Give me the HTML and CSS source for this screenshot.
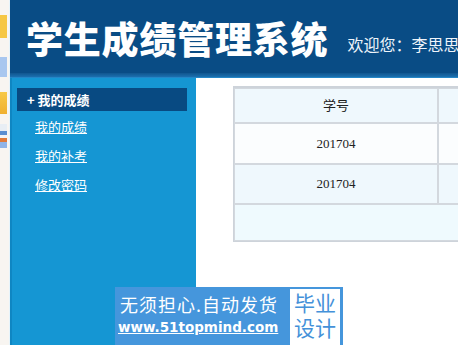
FILE: index.html
```html
<!DOCTYPE html>
<html lang="zh">
<head>
<meta charset="utf-8">
<title>学生成绩管理系统</title>
<link rel="stylesheet" href="styles.css">
</head>
<body>
<div class="page">
  <div class="dock">
    <span class="dock-icon yellow"></span>
    <span class="dock-icon blue"></span>
    <span class="dock-icon orange"></span>
    <span class="dock-icon mixed"></span>
  </div>
  <div class="main">
    <header class="header">
      <h1 class="title">学生成绩管理系统</h1>
      <div class="welcome">欢迎您：李思思</div>
    </header>
    <div class="stripe"></div>
    <div class="body">
      <nav class="sidebar">
        <div class="menu-head">+ 我的成绩</div>
        <a class="menu-link" href="#">我的成绩</a>
        <a class="menu-link" href="#">我的补考</a>
        <a class="menu-link" href="#">修改密码</a>
      </nav>
      <section class="content">
        <table class="grid">
          <tr class="row-head"><td class="c1">学号</td><td class="c2"></td></tr>
          <tr class="row-a"><td class="c1">201704</td><td class="c2"></td></tr>
          <tr class="row-b"><td class="c1">201704</td><td class="c2"></td></tr>
          <tr class="row-foot"><td colspan="2"></td></tr>
        </table>
      </section>
    </div>
  </div>
  <div class="promo">
    <div class="promo-text">
      <div class="promo-line1">无须担心.自动发货</div>
      <a class="promo-url" href="#">www.51topmind.com</a>
    </div>
    <div class="promo-box">
      <span class="promo-word">毕业</span>
      <span class="promo-word">设计</span>
    </div>
  </div>
</div>
</body>
</html>
```

FILE: styles.css
```css
html, body {
  margin: 0;
  padding: 0;
  width: 458px;
  height: 345px;
  overflow: hidden;
  background: #ffffff;
  font-family: "Noto Sans CJK SC", "Noto Sans", sans-serif;
}
.page {
  position: relative;
  display: flex;
  width: 458px;
  height: 345px;
}
.dock {
  flex: 0 0 9px;
  background: #f8f5f1;
  border-right: 1px solid #e6f4fb;
  display: flex;
  flex-direction: column;
  padding-top: 15px;
}
.dock-icon {
  display: block;
  width: 7px;
  margin-bottom: 19px;
}
.dock-icon.yellow { height: 23px; background: #f6c744; }
.dock-icon.blue { height: 20px; background: #a9c7ef; margin-bottom: 15px; }
.dock-icon.orange { height: 22px; background: linear-gradient(#f7c948, #f0b030); margin-bottom: 10px; }
.dock-icon.mixed { height: 24px; background: linear-gradient(#e8eef4 0 30%, #5a8ed0 30% 45%, #f4f4f4 45% 60%, #e07a3a 60% 75%, #8fb4e8 75%); }
.main {
  flex: 1;
  display: flex;
  flex-direction: column;
  min-width: 0;
}
.header {
  height: 73px;
  background: #094c85;
  display: flex;
  align-items: flex-start;
  white-space: nowrap;
  overflow: hidden;
}
.title {
  margin: 19px 0 0 16px;
  font-size: 37px;
  line-height: 38px;
  font-weight: 900;
  color: #ffffff;
  letter-spacing: 0.8px;
}
.welcome {
  margin: 34px 0 0 19px;
  font-size: 16px;
  line-height: 20px;
  color: #eef4fa;
}
.stripe {
  height: 5px;
  background: linear-gradient(#11568f, #1a6cab 70%, #2a93d4);
}
.body {
  flex: 1;
  display: flex;
}
.sidebar {
  flex: 0 0 184px;
  background: #1596d3;
  border-left: 2px solid #0f86c2;
  display: flex;
  flex-direction: column;
  padding-top: 10px;
}
.menu-head {
  margin: 0 9px 0 5px;
  height: 23px;
  line-height: 23px;
  background: #084a82;
  color: #ffffff;
  font-size: 13px;
  font-weight: 700;
  padding-left: 10px;
}
.menu-link {
  display: block;
  margin-left: 23px;
  color: #ffffff;
  font-size: 13px;
  line-height: 29px;
  text-decoration: underline;
}
.menu-head + .menu-link { margin-top: 1px; }
.content {
  flex: 1;
  padding: 8px 0 0 37px;
  overflow: hidden;
}
.grid {
  width: 400px;
  border-collapse: separate;
  border-spacing: 0;
  border: 1px solid #cdd3da;
  border-top-width: 2px;
  font-family: "Liberation Serif", "Noto Sans CJK SC", serif;
  font-size: 13px;
  color: #222222;
}
.grid td {
  border: 1px solid #d3d8de;
  text-align: center;
  padding: 0;
}
.grid .c1 { width: 202px; }
.row-head td { height: 30px; background: #eff8fd; padding-bottom: 3px; }
.row-a td { height: 39px; background: #fbfdfe; }
.row-b td { height: 38px; background: #eff8fd; }
.row-foot td { height: 35px; background: #effafe; }
.promo {
  position: absolute;
  left: 115px;
  top: 287px;
  width: 228px;
  height: 58px;
  background: #4596dc;
  display: flex;
  padding: 2px 3px 0 0;
  box-sizing: border-box;
}
.promo-text {
  flex: 0 0 168px;
  padding: 4px 0 0 5px;
  color: #ffffff;
  overflow: hidden;
}
.promo-line1 {
  font-size: 18px;
  line-height: 22px;
  letter-spacing: 1px;
  white-space: nowrap;
}
.promo-url {
  display: block;
  margin: 3px 0 0 -2px;
  color: #ffffff;
  font-family: "DejaVu Sans", sans-serif;
  font-weight: 700;
  font-size: 13.5px;
  line-height: 18px;
  text-decoration: underline;
  white-space: nowrap;
}
.promo-box {
  flex: 1;
  margin-left: 2px;
  background: #ffffff;
  color: #4491d9;
  display: flex;
  flex-direction: column;
  align-items: center;
  padding-top: 1px;
}
.promo-word {
  display: block;
  font-size: 21px;
  line-height: 25px;
}
```
